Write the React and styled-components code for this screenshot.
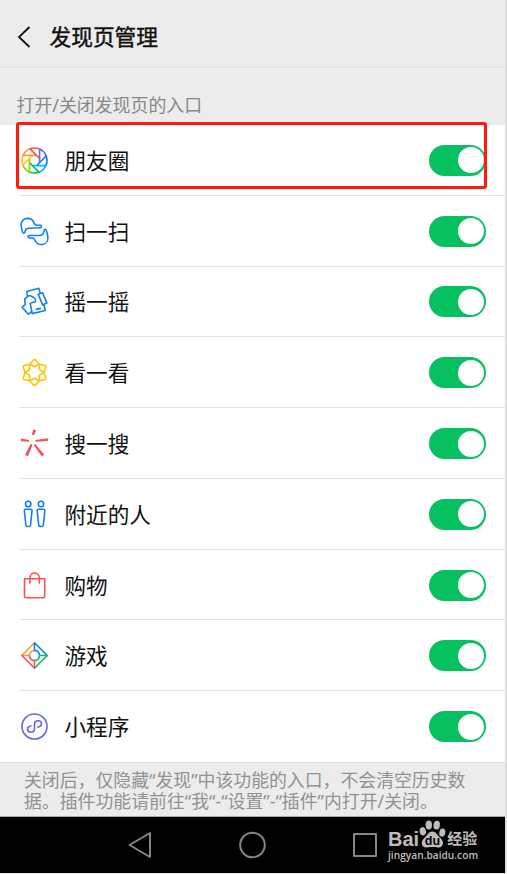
import { useState } from "react";
import styled, { createGlobalStyle } from "styled-components";

const GlobalStyle = createGlobalStyle`
  * {
    box-sizing: border-box;
  }
  body {
    margin: 0;
    background-color: #dedede;
    font-family: "Noto Sans", "Noto Sans CJK SC", sans-serif;
  }
`;

const Screen = styled.div`
  width: 507px;
  height: 874px;
  display: flex;
  flex-direction: column;
  background-color: #ececec;
  border-right: 2px solid #dddddd;
  border-bottom: 1px solid #e8e8e8;
  overflow: hidden;
`;

const Header = styled.header`
  height: 68px;
  flex: none;
  display: flex;
  align-items: center;
  gap: 18.5px;
  padding: 7px 0 0 17px;
  border-bottom: 2px solid #e4e4e4;
`;

const BackButton = styled.button`
  display: flex;
  padding: 0;
  border: none;
  background: none;
  cursor: pointer;
`;

const Title = styled.h1`
  margin: 0;
  padding-top: 1px;
  font-size: 21.7px;
  line-height: 30px;
  font-weight: 400;
  color: #111;
  -webkit-text-stroke: 0.4px #111;
`;

const SectionLabel = styled.div`
  height: 57px;
  flex: none;
  padding: 25px 0 0 16.5px;
  font-size: 17.9px;
  line-height: 24px;
  color: #888;
`;

const List = styled.div`
  height: 637px;
  flex: none;
  display: flex;
  flex-direction: column;
  position: relative;
  background-color: #fff;
`;

const Row = styled.div`
  flex: 1;
  display: flex;
  align-items: center;
  margin-left: 19px;
  padding: 1px 19px 0 0;
  border-bottom: 1px solid ${(props) => (props.$last ? "#fff" : "#e5e5e5")};
`;

const IconBox = styled.div`
  width: 31px;
  display: flex;
  flex: none;
  svg {
    overflow: visible;
    fill: none;
    stroke-width: 1.6;
    stroke-linejoin: round;
    stroke-linecap: round;
  }
`;

const Name = styled.div`
  flex: 1;
  margin-left: 14.5px;
  padding-top: 1px;
  font-size: 21.6px;
  line-height: 30px;
  color: #111;
`;

const Switch = styled.button`
  width: 57.5px;
  height: 31px;
  display: flex;
  align-items: center;
  justify-content: ${(props) => (props.$on ? "flex-end" : "flex-start")};
  padding: 0 2px;
  border: none;
  border-radius: 16px;
  background-color: ${(props) => (props.$on ? "#07c160" : "#d8d8d8")};
  cursor: pointer;
`;

const Knob = styled.span`
  width: 26px;
  height: 26px;
  border-radius: 50%;
  background-color: #fff;
`;

// red frame laid over the first row
const Highlight = styled.div`
  position: absolute;
  top: -3px;
  left: 16px;
  width: 471px;
  height: 67px;
  border: 3px solid #ff1a10;
  border-radius: 3px;
  pointer-events: none;
`;

const Note = styled.div`
  height: 55px;
  flex: none;
  padding: 7px 0 0 24px;
  border-top: 1px solid #e2e2e2;
  border-bottom: 1px solid #a5a8a8;
  font-size: 17.87px;
  line-height: 21px;
  color: #929292;
  white-space: nowrap;
`;

const NavBar = styled.nav`
  flex: 1;
  display: flex;
  align-items: center;
  background-color: #000;
  padding-left: 128px;
`;

const NavIcon = styled.svg`
  width: 26px;
  height: 28px;
  flex: none;
  margin-right: ${(props) => props.$gap}px;
  overflow: visible;
  fill: none;
  stroke: #868686;
  stroke-width: 2;
  stroke-linejoin: round;
`;

const Watermark = styled.div`
  display: flex;
  flex-direction: column;
  margin-bottom: 9px;
  color: #bdbdbd;
`;

const Brand = styled.div`
  height: 28px;
  display: flex;
  align-items: flex-end;
  font-family: "Liberation Sans", "Noto Sans CJK SC", sans-serif;
  font-weight: 700;
  font-size: 20px;
  line-height: 18px;
  svg {
    flex: none;
  }
`;

const BrandCn = styled.span`
  margin-left: 1px;
  font-size: 15px;
  line-height: 18px;
`;

const Domain = styled.div`
  margin-top: 1px;
  font-family: "Open Sans", sans-serif;
  font-weight: 600;
  font-size: 10.2px;
  line-height: 13px;
`;

const blue = "#0f80f2";

const MomentsIcon = () => {
  const colors = [
    "#6467e8",
    "#1477e8",
    "#10aeff",
    "#07c160",
    "#91d300",
    "#ffc300",
    "#fa9d3b",
    "#fa5151",
  ];
  return (
    <svg width="31" height="31" viewBox="0 0 31 31">
      {colors.map((color, i) => (
        <g key={color} stroke={color} transform={`rotate(${i * 45} 15.5 15.5)`}>
          <path d="M20.6 4.1A12.5 12.5 0 0 1 27.2 11" />
          <path d="M20.6 4.1V16.8" />
        </g>
      ))}
    </svg>
  );
};

const ScanIcon = () => (
  <svg width="31" height="31" viewBox="0 0 31 31" stroke={blue}>
    <path d="M4.7 17.2C3.6 17.2 3.6 16.2 3.3 15.1C2.8 13.2 2.1 11.5 2.1 8.9C2.1 4.8 5 2.4 8.6 2.4C12.2 2.4 14.2 4.5 15.3 7.3Q15.9 9.3 17.6 9.3H21.2C22.9 9.3 22.9 11.8 21.2 11.8L10.4 12.3C7.2 12.4 6.4 13.4 6 15.6Q5.8 17.2 4.7 17.2Z" />
    <path d="M26.3 13.2C27.4 13.2 27.4 14.6 27.7 15.6C28.2 17.6 28.9 19.3 28.9 21.9C28.9 26 26 28.6 22.4 28.6C18.8 28.6 16.9 26.5 15.7 23.7Q15.1 22 13.4 22H10.3C8.6 22 8.6 19.5 10.3 19.5H20.6C23.8 19.4 24.6 17.5 25 14.9Q25.2 13.2 26.3 13.2Z" />
  </svg>
);

const ShakeIcon = () => (
  <svg width="31" height="31" viewBox="0 0 31 31" stroke={blue}>
    <path d="M8.4 10L7.8 5.4L19.8 2.2L21 6.2" />
    <path d="M19.2 8.3L23.6 6.7L27.9 17.1L23.6 18.9Z" />
    <path d="M11.2 17.2L13.2 27.6L26.2 24.5L25 19" />
    <path d="M12.5 16.8L16.4 15.8C17.3 14.2 15.4 11.8 13.6 10.7Q11.2 9.2 9.1 10.1L5.7 13.2L6.2 18.7L3.2 21.2L9.3 28.2L12.7 25.6" />
    <path d="M17.4 23.4L21.4 22.4" />
  </svg>
);

const LookIcon = () => (
  <svg width="31" height="31" viewBox="0 0 31 31" stroke="#ffc300">
    {[0, 60, 120, 180, 240, 300].map((angle) => (
      <path
        key={angle}
        transform={`rotate(${angle} 15.5 15.5)`}
        d="M10.8 7.3L14.7 2.8Q15.5 2.1 16.3 2.8L20.2 7.3L15.5 9.7Z"
      />
    ))}
  </svg>
);

const SearchIcon = () => (
  <svg width="31" height="31" viewBox="0 0 31 31">
    <g fill="#fa5151">
      <path d="M14.2 1.6L17.2 2.3L15 7.2L12.9 6.6Z" />
      <path d="M2 10.4L10.2 11.9L9.9 13.8L2 13.2Z" />
      <path d="M29.2 10.3V13L16.7 13.8L16.2 12Z" />
      <path d="M11.7 15.8L13.6 16.7L9 28.3L6 27Z" />
      <path d="M14.7 17.1L16.2 15.9L25.1 26.5L22.8 28.4Z" />
    </g>
  </svg>
);

const NearbyIcon = () => (
  <svg width="31" height="31" viewBox="0 0 31 31" stroke={blue}>
    {[9.2, 22].map((x) => (
      <g key={x} transform={`translate(${x} 0)`}>
        <circle cx="0" cy="5" r="2.7" />
        <path d="M-2.4 10.2H2.4Q4 10.2 3.8 12L2.3 26Q2.1 27.5 .8 27.5H-.8Q-2.1 27.5 -2.3 26L-3.8 12Q-4 10.2 -2.4 10.2Z" />
      </g>
    ))}
  </svg>
);

const ShopIcon = () => (
  <svg width="31" height="31" viewBox="0 0 31 31" stroke="#fa5151">
    <path d="M5.5 8.7H25.7V26.1Q25.7 27.8 24 27.8H7.2Q5.5 27.8 5.5 26.1Z" />
    <path d="M10.9 13V8C11 1.3 20.2 1.3 20.3 8V13" />
  </svg>
);

const GameIcon = () => (
  <svg width="31" height="31" viewBox="0 0 31 31">
    <path stroke="#fa9d3b" d="M15.5 2.8L2.8 15.5H10.4A5.1 5.1 0 0 1 15.5 10.4" />
    <path stroke={blue} d="M28.2 15.5L15.5 2.8V10.4A5.1 5.1 0 0 1 20.6 15.5" />
    <path stroke="#07c160" d="M15.5 28.2L28.2 15.5H20.6A5.1 5.1 0 0 1 15.5 20.6" />
    <path stroke="#fa5151" d="M2.8 15.5L15.5 28.2V20.6A5.1 5.1 0 0 1 10.4 15.5" />
  </svg>
);

const MiniIcon = () => (
  <svg width="31" height="31" viewBox="0 0 31 31" stroke="#6467e8">
    <circle cx="15.5" cy="15.5" r="12.5" />
    <path d="M19 16.1C21.2 15.8 22.5 14.4 22.5 12.8C22.5 10.8 20.9 9.8 19.2 9.8C17.2 9.8 15.5 11.1 15.5 13.2V17.8C15.5 19.9 13.9 21.2 11.9 21.2C10.1 21.2 8.5 20.1 8.5 18.3C8.5 16.4 10 15.3 12 15" />
  </svg>
);

const PawIcon = () => (
  <svg width="27" height="28" viewBox="0 0 27 28">
    <g fill="#bdbdbd">
      <ellipse cx="3.8" cy="11.3" rx="3.1" ry="4.2" transform="rotate(-12 3.8 11.3)" />
      <ellipse cx="9.8" cy="5" rx="3.2" ry="4.6" />
      <ellipse cx="17.7" cy="5.2" rx="3.2" ry="4.4" transform="rotate(8 17.7 5.2)" />
      <ellipse cx="23.3" cy="12.6" rx="3" ry="4.1" transform="rotate(12 23.3 12.6)" />
      <path d="M13.5 11.5C17 11.5 18 15 21.5 18C26 22.5 24 28 19 27.4C15 27 12 27 8 27.4C2.5 28 1 22.5 5 18.3C9 15 9.5 11.5 13.5 11.5Z" />
    </g>
    <text x="13.4" y="25" textAnchor="middle" fontSize="12.5" fontWeight="700" fill="#000">
      du
    </text>
  </svg>
);

const features = [
  { id: "moments", name: "朋友圈", Icon: MomentsIcon },
  { id: "scan", name: "扫一扫", Icon: ScanIcon },
  { id: "shake", name: "摇一摇", Icon: ShakeIcon },
  { id: "look", name: "看一看", Icon: LookIcon },
  { id: "search", name: "搜一搜", Icon: SearchIcon },
  { id: "nearby", name: "附近的人", Icon: NearbyIcon },
  { id: "shop", name: "购物", Icon: ShopIcon },
  { id: "game", name: "游戏", Icon: GameIcon },
  { id: "mini", name: "小程序", Icon: MiniIcon },
];

const App = () => {
  const [hidden, setHidden] = useState([]);

  const toggle = (id) => {
    setHidden(
      hidden.includes(id) ? hidden.filter((item) => item !== id) : [...hidden, id]
    );
  };

  return (
    <>
      <GlobalStyle />
      <Screen lang="zh-CN">
        <Header>
          <BackButton aria-label="返回">
            <svg width="14" height="22" viewBox="0 0 14 22" fill="none" stroke="#111" strokeWidth="1.8">
              <path d="M12.5 1L2 11L12.5 21" />
            </svg>
          </BackButton>
          <Title>发现页管理</Title>
        </Header>
        <SectionLabel>打开/关闭发现页的入口</SectionLabel>
        <List>
          {features.map(({ id, name, Icon }, index) => (
            <Row key={id} $last={index === features.length - 1}>
              <IconBox>
                <Icon />
              </IconBox>
              <Name>{name}</Name>
              <Switch
                $on={!hidden.includes(id)}
                aria-label={name}
                onClick={() => toggle(id)}
              >
                <Knob />
              </Switch>
            </Row>
          ))}
          <Highlight />
        </List>
        <Note>
          关闭后，仅隐藏“发现”中该功能的入口，不会清空历史数
          <br />
          据。插件功能请前往“我“-“设置”-“插件”内打开/关闭。
        </Note>
        <NavBar>
          <NavIcon $gap={85} viewBox="0 0 26 28">
            <path d="M1.5 14L22 2V26Z" />
          </NavIcon>
          <NavIcon $gap={88} viewBox="0 0 26 28">
            <circle cx="13.5" cy="14" r="12.3" />
          </NavIcon>
          <NavIcon $gap={9} viewBox="0 0 26 28">
            <rect x="1" y="3" width="22" height="22" />
          </NavIcon>
          <Watermark>
            <Brand>
              Bai
              <PawIcon />
              <BrandCn>经验</BrandCn>
            </Brand>
            <Domain>jingyan.baidu.com</Domain>
          </Watermark>
        </NavBar>
      </Screen>
    </>
  );
};

export default App;
